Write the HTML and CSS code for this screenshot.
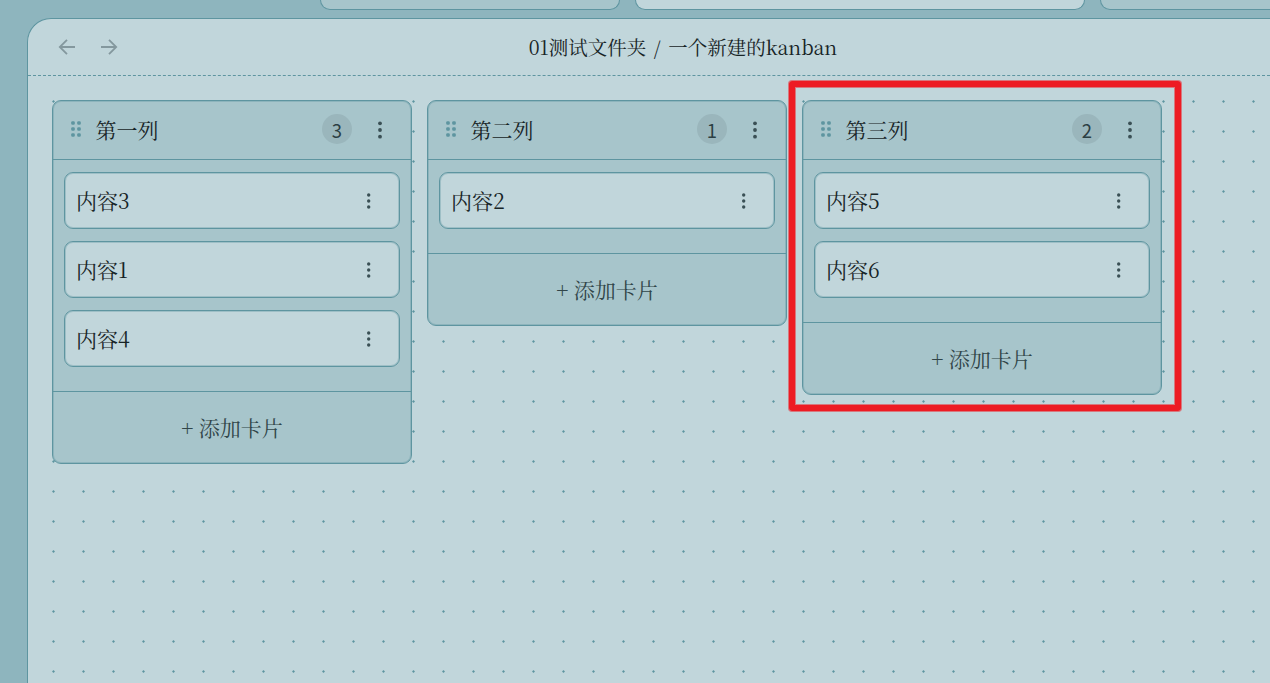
FILE: index.html
```html
<!DOCTYPE html>
<html lang="zh-CN">
<head>
<meta charset="utf-8">
<title>kanban</title>
<link rel="stylesheet" href="styles.css">
</head>
<body>
<svg class="defs" width="0" height="0" aria-hidden="true">
  <symbol id="grip" viewBox="0 0 12 18"><g fill="currentColor"><rect x="1.2" y="1.2" width="3.6" height="3.6" rx="1.2"/><rect x="7.2" y="1.2" width="3.6" height="3.6" rx="1.2"/><rect x="1.2" y="7.2" width="3.6" height="3.6" rx="1.2"/><rect x="7.2" y="7.2" width="3.6" height="3.6" rx="1.2"/><rect x="1.2" y="13.2" width="3.6" height="3.6" rx="1.2"/><rect x="7.2" y="13.2" width="3.6" height="3.6" rx="1.2"/></g></symbol>
  <symbol id="more" viewBox="0 0 6 20"><g fill="currentColor"><circle cx="3" cy="3.3" r="1.9"/><circle cx="3" cy="10" r="1.9"/><circle cx="3" cy="16.7" r="1.9"/></g></symbol>
  <symbol id="arrow" viewBox="0 0 18 18"><path d="M17 9H2M9 1.8L1.8 9L9 16.2" fill="none" stroke="currentColor" stroke-width="1.8"/></symbol>
</svg>
<div class="app">
  <div class="tabs"><div class="tab"></div><div class="tab tab-active"></div><div class="tab tab-last"></div></div>
  <main class="window">
    <header class="topbar">
      <nav class="history"><svg class="arrow"><use href="#arrow"/></svg><svg class="arrow forward"><use href="#arrow"/></svg></nav>
      <h1 class="crumbs"><span>01测试文件夹</span><span class="slash">/</span><span>一个新建的kanban</span></h1>
    </header>
    <div class="board">
      <section class="column">
        <div class="column-head"><svg class="grip"><use href="#grip"/></svg><h2 class="name">第一列</h2><span class="count">3</span><svg class="more"><use href="#more"/></svg></div>
        <div class="cards">
          <div class="card"><span>内容3</span><svg class="more more-card"><use href="#more"/></svg></div>
          <div class="card"><span>内容1</span><svg class="more more-card"><use href="#more"/></svg></div>
          <div class="card"><span>内容4</span><svg class="more more-card"><use href="#more"/></svg></div>
        </div>
        <div class="add">+ 添加卡片</div>
      </section>
      <section class="column">
        <div class="column-head"><svg class="grip"><use href="#grip"/></svg><h2 class="name">第二列</h2><span class="count">1</span><svg class="more"><use href="#more"/></svg></div>
        <div class="cards">
          <div class="card"><span>内容2</span><svg class="more more-card"><use href="#more"/></svg></div>
        </div>
        <div class="add">+ 添加卡片</div>
      </section>
      <section class="column marked">
        <div class="column-head"><svg class="grip"><use href="#grip"/></svg><h2 class="name">第三列</h2><span class="count">2</span><svg class="more"><use href="#more"/></svg></div>
        <div class="cards">
          <div class="card"><span>内容5</span><svg class="more more-card"><use href="#more"/></svg></div>
          <div class="card"><span>内容6</span><svg class="more more-card"><use href="#more"/></svg></div>
        </div>
        <div class="add">+ 添加卡片</div>
      </section>
    </div>
  </main>
</div>
</body>
</html>
```

FILE: styles.css
```css
* { box-sizing: border-box; }
body {
  margin: 0;
  overflow: hidden;
  font-family: "Noto Serif CJK SC", "Source Han Serif SC", "Noto Serif SC", "Liberation Serif", "Noto Sans CJK SC", serif;
  color: #172426;
}
h1, h2 { margin: 0; font-weight: 400; }
svg { display: block; flex: none; }
.defs { display: none; }
.app { height: 683px; display: flex; flex-direction: column; overflow: hidden; background: #8eb5be; }
.tabs { flex: none; height: 18px; padding-left: 320px; display: flex; gap: 15px; }
.tab { flex: none; width: 300px; height: 10px; background: #a7c5cb; border: 1px solid #5e95a0; border-top: 0; border-radius: 0 0 10px 10px; }
.tab-active { width: 450px; background: #c1d6db; }
.tab-last { width: 300px; }
.window { flex: 1; margin-left: 27px; display: flex; flex-direction: column; background: #c1d6db; border: solid #5e95a0; border-width: 1px 0 0 1px; border-top-left-radius: 24px; }
.topbar { flex: none; height: 57px; position: relative; display: flex; align-items: center; justify-content: center; border-bottom: 1px dashed #5e95a0; }
.history { position: absolute; left: 30px; top: 19px; display: flex; gap: 24px; color: #84989e; }
.arrow { width: 18px; height: 18px; }
.forward { transform: scaleX(-1); }
.crumbs { display: flex; gap: 7.5px; margin-left: 68px; font-size: 19.5px; line-height: 28px; white-space: nowrap; }
.board {
  flex: 1;
  margin: 24px 0 0 24px;
  display: flex;
  align-items: flex-start;
  gap: 15px;
  background: radial-gradient(circle at 1.5px 1.5px, #5e95a0 0.8px, transparent 1.5px) 0 0 / 30px 30px;
}
.column { position: relative; flex: none; width: 360px; background: #a7c5cb; border: 1px solid #5e95a0; border-radius: 9px; box-shadow: inset 0 0 0 1px rgba(94, 149, 160, .35); }
.marked::after { content: ""; position: absolute; inset: -20px -20px -17px -14px; border: 6px solid #ed1c24; border-radius: 3px; box-shadow: 0 0 0 1px rgba(237, 28, 36, .5), inset 0 0 0 1px rgba(237, 28, 36, .5); }
.column-head { height: 59px; padding: 0 28px 2px 17px; display: flex; align-items: center; border-bottom: 1px solid #5e95a0; }
.grip { width: 12px; height: 18px; color: #5e95a0; }
.name { flex: 1; margin-left: 13.5px; font-size: 21px; line-height: 30px; }
.count { width: 30px; height: 30px; margin-right: 25px; border-radius: 50%; background: #9ab6bc; color: #2c3f44; font: 18.5px/32px "Noto Sans CJK SC", sans-serif; text-align: center; }
.column-head .more { margin-top: 1px; }
.more { width: 6px; height: 20px; color: #3a5055; }
.cards { padding: 12px 11px 24px; display: flex; flex-direction: column; gap: 12px; }
.card { height: 57px; padding: 0 28px 1px 11px; display: flex; align-items: center; justify-content: space-between; background: #c1d6db; border: 1px solid #5e95a0; border-radius: 9px; box-shadow: inset 0 0 0 1px rgba(94, 149, 160, .35); font-size: 21px; line-height: 30px; }
.card span { margin-top: -1px; }
.more-card { width: 5.4px; height: 18px; margin-top: 1px; }
.add { height: 72px; border-top: 1px solid #5e95a0; color: #314549; font-size: 21px; line-height: 70px; text-align: center; }
```
